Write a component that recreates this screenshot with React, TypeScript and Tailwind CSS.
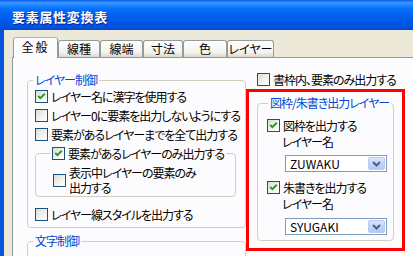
import React from "react";

const TABS = [
  { label: "全般", w: "w-[45px]", active: true },
  { label: "線種", w: "w-[42px]" },
  { label: "線端", w: "w-[43px]" },
  { label: "寸法", w: "w-[40px]" },
  { label: "色", w: "w-[44px]" },
  { label: "レイヤー", w: "w-[47px]" },
];

function Check({ checked }: { checked?: boolean }) {
  return (
    <span className="flex h-[13px] w-[13px] shrink-0 items-center justify-center border border-[#1c5180] bg-[linear-gradient(135deg,#dcdcd7,#f4f4f0_60%,#ffffff)]">
      {checked && (
        <svg width="11" height="11" viewBox="0 0 11 11">
          <path d="M2.2 5 L4.4 7.2 L8.8 2.8" fill="none" stroke="#21a121" strokeWidth="2" />
        </svg>
      )}
    </span>
  );
}

function Row({ checked, children, className = "" }: { checked?: boolean; children: React.ReactNode; className?: string }) {
  return (
    <div className={"flex h-[19px] items-center gap-[3px] " + className}>
      <Check checked={checked} />
      <span className="whitespace-nowrap leading-[14px]">{children}</span>
    </div>
  );
}

function Combo({ value }: { value: string }) {
  return (
    <div className="ml-[18px] flex h-[17px] w-[102px] items-center border border-[#7f9db9] bg-white p-px tracking-normal">
      <span className="flex-1 pl-[3px] leading-[14px]">{value}</span>
      <span className="flex h-[13px] w-[17px] items-center justify-center rounded-[2px] border border-[#bac9f5] bg-[linear-gradient(to_bottom,#dbe5fd,#c1d3fb_50%,#b4c8f5)]">
        <svg width="9" height="6" viewBox="0 0 9 6">
          <path d="M1 1 L4.5 4.5 L8 1" fill="none" stroke="#4d6185" strokeWidth="2" />
        </svg>
      </span>
    </div>
  );
}

export default function App() {
  return (
    <div className="flex h-[256px] w-[413px] flex-col overflow-hidden bg-[#ece9d8] font-['Noto_Sans_CJK_JP','Noto_Sans_CJK_SC',sans-serif] text-[12px] tracking-[-1px] text-black [font-feature-settings:'palt']">
      {/* title bar */}
      <div className="h-[30px] shrink-0 bg-[linear-gradient(to_bottom,#0058e6_0%,#3a93ff_8%,#288eff_14%,#127dff_22%,#036ffc_32%,#0262ee_50%,#0057e5_72%,#0054e3_88%,#0049cf_100%)] pl-[12px] pt-[8px]">
        <span className="text-[13px] font-bold leading-[16px] tracking-[0.7px] text-white [text-shadow:1px_1px_0_#0a1e8c]">
          要素属性変換表
        </span>
      </div>

      <div className="flex flex-1 flex-col border-l-[4px] border-[#0855dd] pl-[8px] pt-[7px]">
        {/* tabs */}
        <div className="flex h-[20px] items-end pl-px tracking-normal">
          {TABS.map((t) =>
            t.active ? (
              <div
                key={t.label}
                className={"relative z-10 -mb-px flex h-[21px] flex-col rounded-t-[3px] border-x border-[#919b9c] bg-[#fcfcfe] " + t.w}
              >
                <div className="h-[3px] rounded-t-[2px] bg-[linear-gradient(to_bottom,#e68b2c,#ffc73c)]" />
                <div className="flex flex-1 items-center justify-center pb-[2px] tracking-[2px]">{t.label}</div>
              </div>
            ) : (
              <div
                key={t.label}
                className={"flex h-[17px] items-center justify-center rounded-t-[3px] border border-b-0 border-[#919b9c] bg-[linear-gradient(to_bottom,#ffffff,#f3f3ef_70%,#dcd8cc)] " + t.w}
              >
                {t.label}
              </div>
            )
          )}
        </div>

        {/* tab panel */}
        <div className="flex w-[430px] flex-1 border border-[#919b9c] bg-[#fcfcfe] pl-[14px] pt-[12px]">
          {/* left column */}
          <div className="mt-[3px] flex w-[219px] flex-col">
            <fieldset className="rounded-[4px] border border-[#d0d0bf]">
              <legend className="ml-[5px] whitespace-nowrap px-[2px] leading-[14px] text-[#0046d5]">レイヤー制御</legend>
              <div className="pb-[3px] pl-[7px]">
                <Row checked>レイヤー名に漢字を使用する</Row>
                <Row>レイヤー0に要素を出力しないようにする</Row>
                <Row>要素があるレイヤーまでを全て出力する</Row>
                <fieldset className="mr-[9px] rounded-[4px] border border-[#d0d0bf]">
                  <legend className="ml-[14px] px-[2px]">
                    <Row checked>要素があるレイヤーのみ出力する</Row>
                  </legend>
                  <div className="mt-[2px] flex items-center gap-[3px] pb-[1px] pl-[17px]">
                    <Check />
                    <div className="flex flex-col">
                      <span className="h-[15px] whitespace-nowrap leading-[15px]">表示中レイヤーの要素のみ</span>
                      <span className="h-[15px] whitespace-nowrap leading-[15px]">出力する</span>
                    </div>
                  </div>
                </fieldset>
                <Row className="mt-[8px]">レイヤー線スタイルを出力する</Row>
              </div>
            </fieldset>
            <fieldset className="mt-[6px] h-[40px] rounded-[4px] border border-[#d0d0bf]">
              <legend className="ml-[5px] whitespace-nowrap px-[2px] leading-[14px] text-[#0046d5]">文字制御</legend>
            </fieldset>
          </div>

          {/* right column */}
          <div className="flex w-[159px] flex-col">
            <Row className="ml-[11px] h-[18px]">書枠内、要素のみ出力する</Row>
            <div className="border-[3px] border-[#ff0000] px-[8px] pb-[7px] pt-[4px]">
              <fieldset className="rounded-[4px] border border-[#d0d0bf]">
                <legend className="ml-[10px] whitespace-nowrap px-[2px] leading-[14px] text-[#0046d5]">図枠/朱書き出力レイヤー</legend>
                <div className="pb-[5px] pl-[9px]">
                  <Row checked className="mt-[6px]">図枠を出力する</Row>
                  <div className="h-[14px] pl-[15px] leading-[14px]">レイヤー名</div>
                  <div className="mt-[6px]">
                    <Combo value="ZUWAKU" />
                  </div>
                  <Row checked className="mt-[6px]">朱書きを出力する</Row>
                  <div className="h-[14px] pl-[15px] leading-[14px]">レイヤー名</div>
                  <div className="mt-[7px]">
                    <Combo value="SYUGAKI" />
                  </div>
                </div>
              </fieldset>
            </div>
          </div>
        </div>
      </div>
    </div>
  );
}
